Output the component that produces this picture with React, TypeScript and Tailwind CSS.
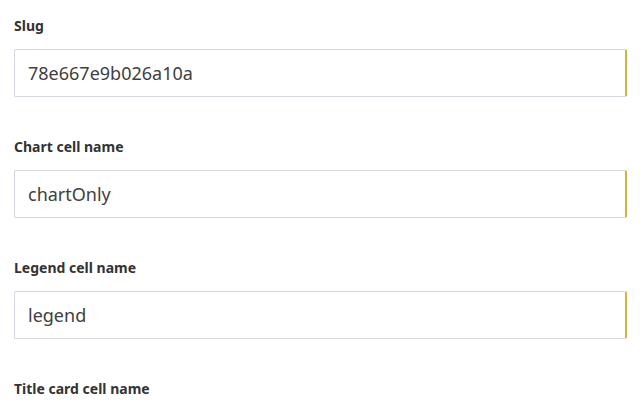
import React from 'react';

const fields = [
  { label: 'Slug', value: '78e667e9b026a10a' },
  { label: 'Chart cell name', value: 'chartOnly' },
  { label: 'Legend cell name', value: 'legend' },
  { label: 'Title card cell name', value: '' },
];

export default function App() {
  return (
    <div className="w-[640px] h-[400px] overflow-hidden bg-white font-['Noto_Sans',sans-serif] pl-[14px] pr-[13px] pt-4">
      <div className="flex flex-col gap-10">
        {fields.map((f) => (
          <div key={f.label} className="flex flex-col gap-[13px]">
            <label className="text-[14px] leading-5 font-bold text-[#333]">{f.label}</label>
            <div className="h-12 flex items-center border border-[#d6d6e0] border-r-2 border-r-[#d8b135] rounded-[2px] px-[13px]">
              <span className="text-[18px] text-[#404040]">{f.value}</span>
            </div>
          </div>
        ))}
      </div>
    </div>
  );
}
